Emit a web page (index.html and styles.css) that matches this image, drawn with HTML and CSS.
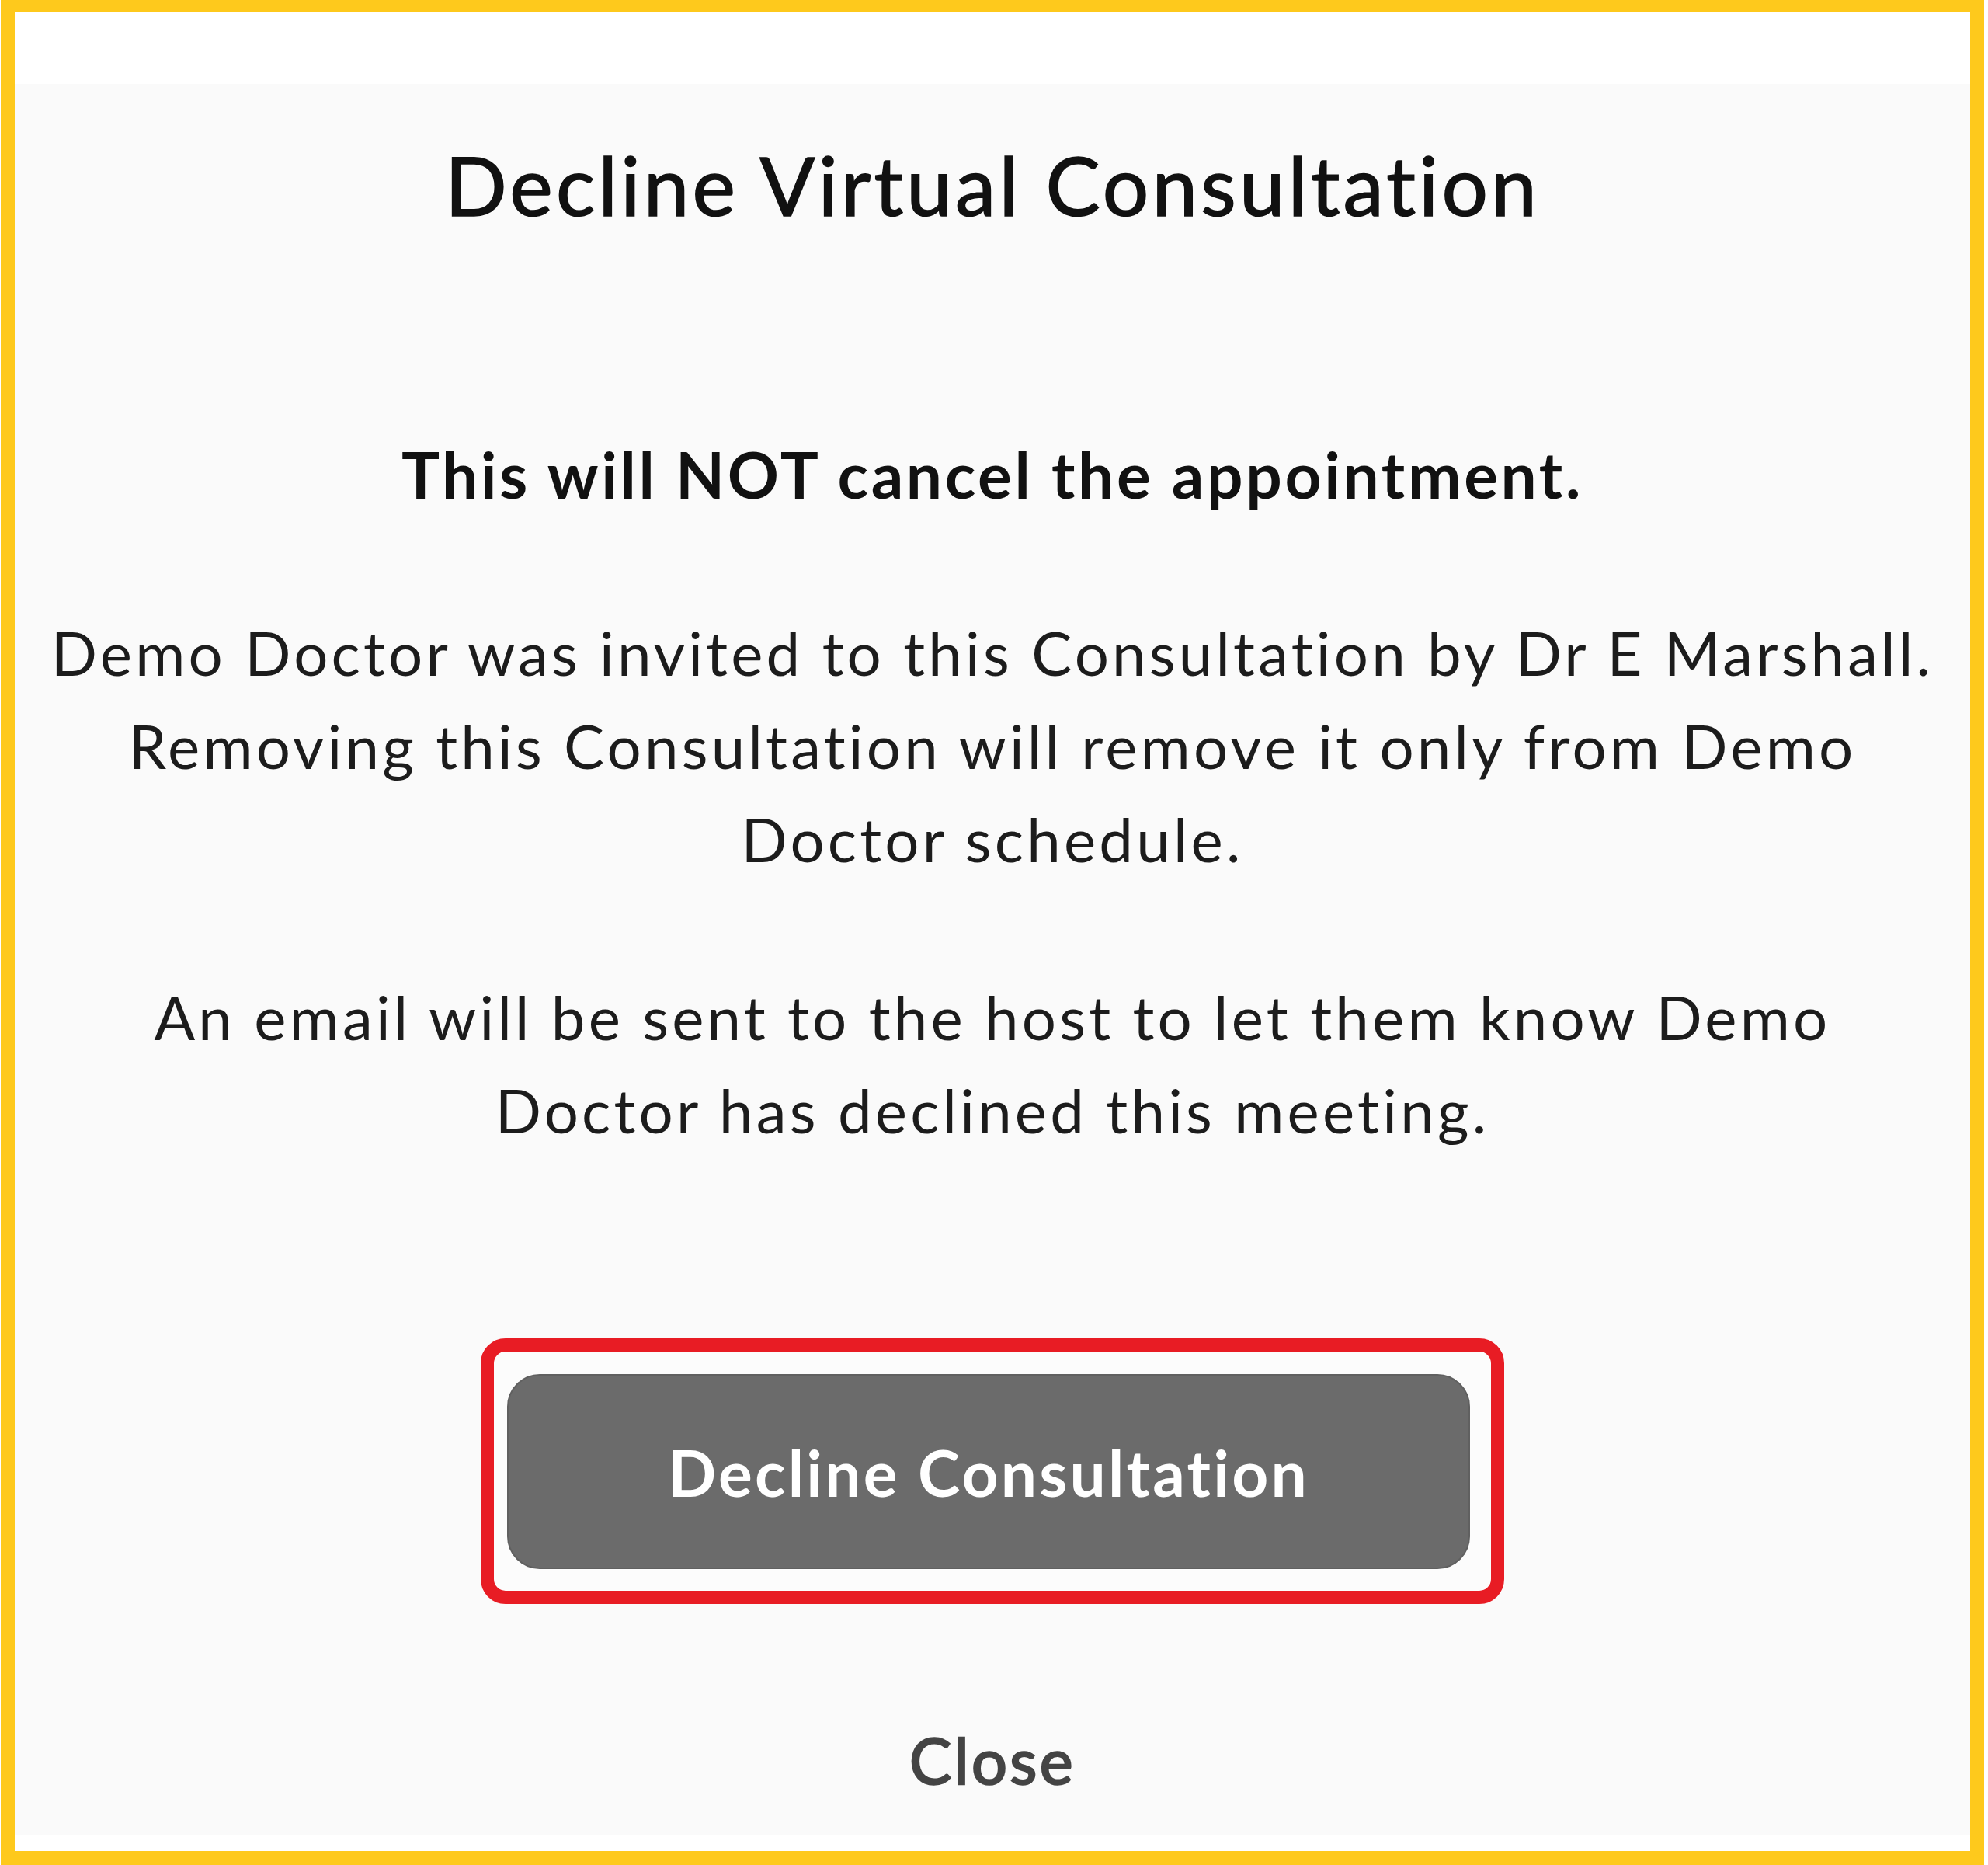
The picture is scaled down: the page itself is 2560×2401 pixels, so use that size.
FILE: index.html
```html
<!DOCTYPE html>
<html lang="en">
<head>
<meta charset="utf-8">
<title>Decline Virtual Consultation</title>
<link rel="stylesheet" href="styles.css">
</head>
<body>
<div class="frame">
  <div class="panel">
    <div class="dialog">
      <h1 class="title">Decline Virtual Consultation</h1>
      <p class="warning">This will NOT cancel the appointment.</p>
      <p class="body-text">Demo Doctor was invited to this Consultation by Dr E Marshall. Removing this Consultation will remove it only from Demo Doctor schedule.</p>
      <p class="body-text second">An email will be sent to the host to let them know Demo Doctor has declined this meeting.</p>
      <div class="highlight">
        <button class="decline-btn" type="button">Decline Consultation</button>
      </div>
      <button class="close-btn" type="button">Close</button>
    </div>
  </div>
</div>
</body>
</html>
```

FILE: styles.css
```css
html, body {
  margin: 0;
  padding: 0;
  background: #ffffff;
}

.frame {
  margin: 0 5px 0 1px;
  height: 2401px;
  box-sizing: border-box;
  background: #fec91c;
  padding: 15px 18px 18px 18px;
}

.panel {
  height: 100%;
  background: #ffffff;
  padding: 93px 0 20px 0;
  box-sizing: border-box;
}

.dialog {
  height: 100%;
  background: #fafafa;
  display: flex;
  flex-direction: column;
  align-items: center;
  text-align: center;
  font-family: Lato, "Open Sans", sans-serif;
  font-variant-ligatures: none;
  color: #151515;
  padding-top: 66px;
  box-sizing: border-box;
}

.title {
  margin: 0;
  font-size: 105px;
  line-height: 1.2;
  font-weight: 400;
  letter-spacing: 4.2px;
  color: #111111;
  -webkit-text-stroke: 1.6px #111111;
}

.warning {
  margin: 261px 0 0 0;
  font-size: 82px;
  line-height: 1.2;
  font-weight: 700;
  letter-spacing: 3.6px;
  color: #111111;
}

.body-text {
  margin: 121px 0 0 0;
  font-size: 78px;
  line-height: 120px;
  font-weight: 400;
  letter-spacing: 4.2px;
  color: #1c1c1c;
  padding: 0 40px;
}

.body-text.second {
  margin-top: 109px;
  padding: 0 120px;
}

.highlight {
  margin-top: 234px;
  border: 17px solid #e81c24;
  border-radius: 32px;
  background: #fcfcfc;
  padding: 29px 27px 28px 17px;
}

.decline-btn {
  display: block;
  width: 1240px;
  height: 251px;
  border: 2px solid #606060;
  border-radius: 42px;
  background: #6b6b6b;
  color: #ffffff;
  font-family: Lato, "Open Sans", sans-serif;
  font-variant-ligatures: none;
  font-size: 82px;
  font-weight: 700;
  letter-spacing: 3.2px;
  cursor: pointer;
}

.close-btn {
  margin-top: 152px;
  border: none;
  background: transparent;
  font-family: Lato, "Open Sans", sans-serif;
  font-variant-ligatures: none;
  font-size: 81px;
  line-height: 1.2;
  font-weight: 400;
  letter-spacing: 3.4px;
  color: #444444;
  -webkit-text-stroke: 2.4px #444444;
  padding: 0;
  cursor: pointer;
}
```
